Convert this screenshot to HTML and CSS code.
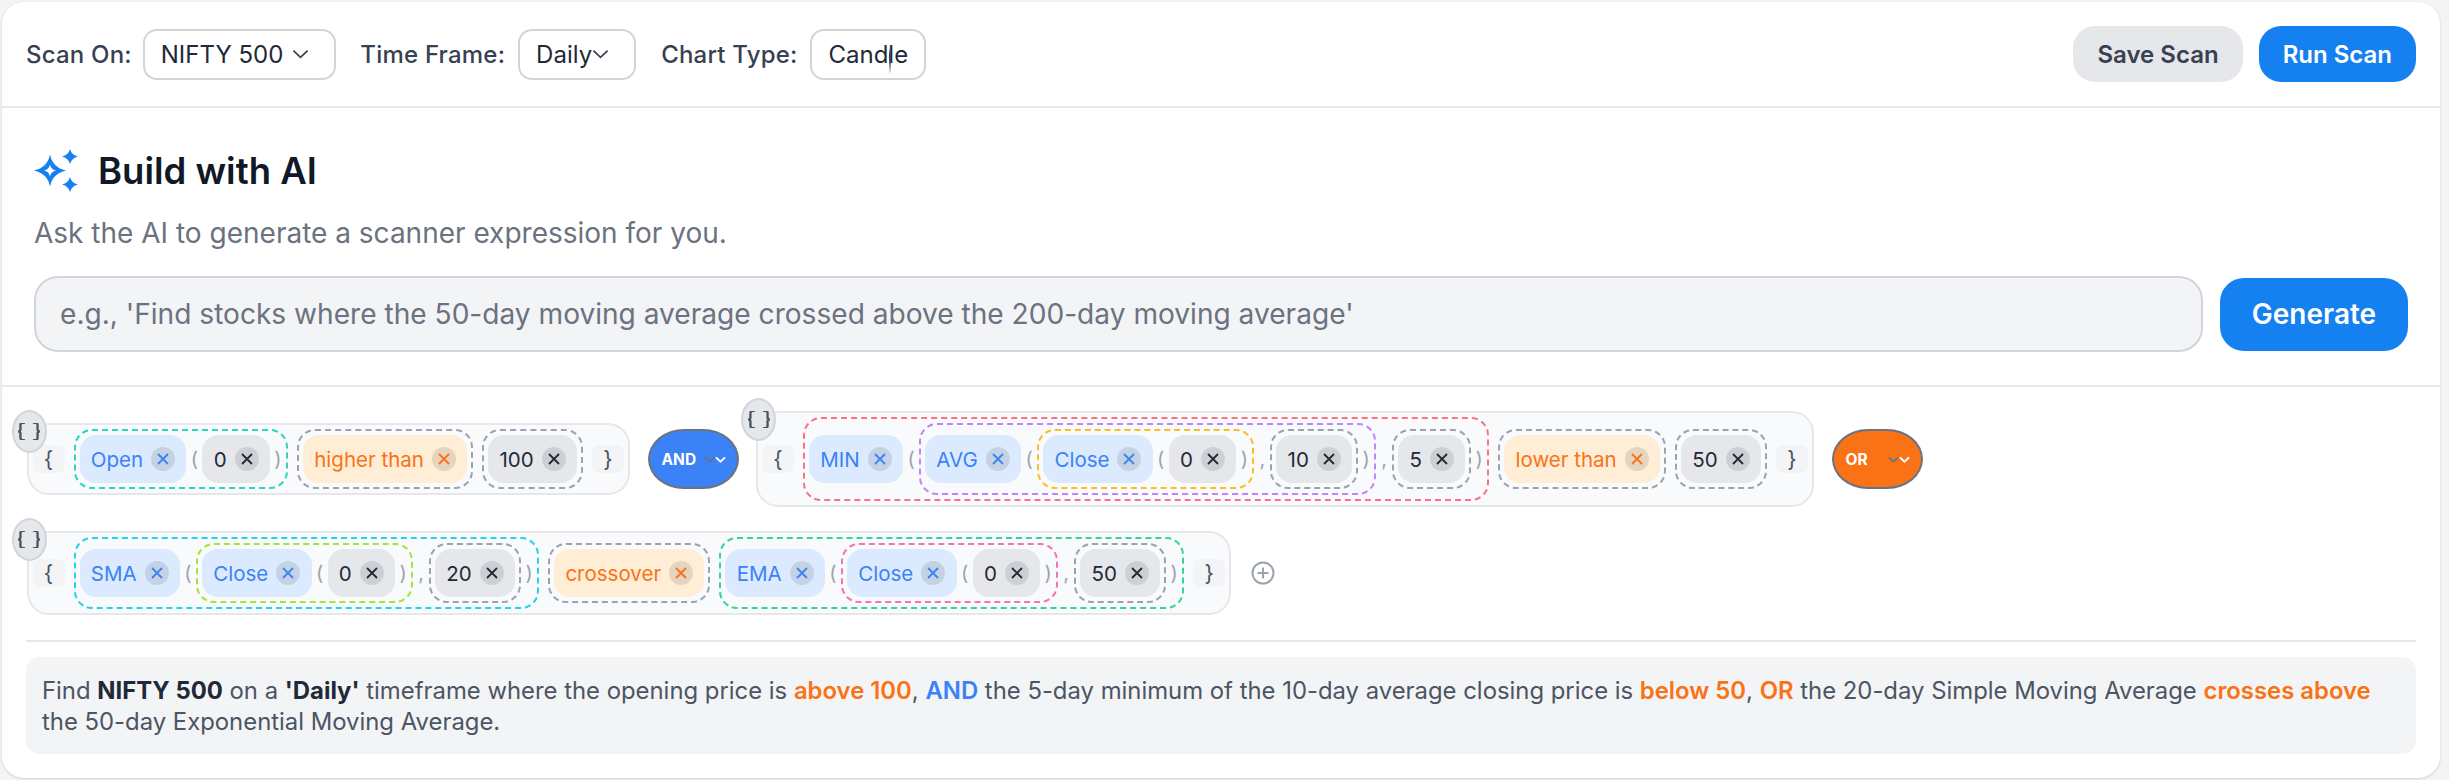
FILE: index.html
```html
<!DOCTYPE html>
<html lang="en">
<head>
    <meta charset="UTF-8">
    <meta name="viewport" content="width=device-width, initial-scale=1.0">
    <title>Scanner Builder</title>
    <link rel="stylesheet" href="styles.css">
</head>
<body>
    <svg class="defs" width="0" height="0">
        <symbol id="i-x" viewBox="0 0 12 12"><path d="M1 1l10 10M11 1L1 11"/></symbol>
        <symbol id="i-down" viewBox="0 0 18 10"><path d="M1.500 1.500L9 8.500l7.500-7"/></symbol>
        <symbol id="i-braces" viewBox="3 3 18 18" preserveAspectRatio="none"><path d="M8 3H7a2 2 0 0 0-2 2v5a2 2 0 0 1-2 2 2 2 0 0 1 2 2v5c0 1.100.9 2 2 2h1"/><path d="M16 21h1a2 2 0 0 0 2-2v-5c0-1.100.9-2 2-2a2 2 0 0 1-2-2V5a2 2 0 0 0-2-2h-1"/></symbol>
    </svg>

    <div class="card">
        <div class="toolbar">
            <div class="toolbar-left">
                <label class="field-label field-first">Scan On:</label>
                <div class="select select-wide">NIFTY 500 <svg class="chevron"><use href="#i-down"/></svg></div>
                <label class="field-label">Time Frame:</label>
                <div class="select select-tight">Daily<svg class="chevron"><use href="#i-down"/></svg></div>
                <label class="field-label">Chart Type:</label>
                <div class="select select-candle">Candle<svg class="chevron chevron-squashed" preserveAspectRatio="none" viewBox="0 0 18 10"><path d="M1.500 1.500L9 8.500l7.500-7"/></svg></div>
            </div>
            <div class="toolbar-right">
                <button class="btn btn-gray">Save Scan</button>
                <button class="btn btn-blue">Run Scan</button>
            </div>
        </div>

        <div class="ai-section">
            <div class="ai-title">
                <svg class="sparkles" viewBox="0 0 46 44">
                    <path fill-rule="evenodd" d="M16 5.500Q18.500 18.500 32 21.500 18.500 24.500 16 37.500 13.500 24.500 0 21.500 13.500 18.500 16 5.500ZM16 15.500Q15 20.500 10 21.500 15 22.500 16 27.500 17 22.500 22 21.500 17 20.500 16 15.500Z"/>
                    <path d="M36 0Q37.500 6 44 7.500 37.500 9 36 15 34.500 9 28 7.500 34.500 6 36 0Z"/>
                    <path d="M36 28Q37.500 34 44 35.500 37.500 37 36 43 34.500 37 28 35.500 34.500 34 36 28Z"/>
                </svg>
                <h2>Build with AI</h2>
            </div>
            <p class="ai-sub">Ask the AI to generate a scanner expression for you.</p>
            <div class="ai-form">
                <input class="ai-input" type="text" placeholder="e.g., 'Find stocks where the 50-day moving average crossed above the 200-day moving average'">
                <button class="btn-generate">Generate</button>
            </div>
        </div>

        <div class="builder">
            <div class="builder-row">
                <div class="group">
                    <button class="braces-btn"><svg><use href="#i-braces"/></svg></button>
                    <span class="brace">{</span>
                    <div class="dash d-teal">
                        <span class="chip chip-blue">Open <span class="x"><svg><use href="#i-x"/></svg></span></span>
                        <span class="paren">(</span>
                        <span class="chip chip-gray">0 <span class="x"><svg><use href="#i-x"/></svg></span></span>
                        <span class="paren">)</span>
                    </div>
                    <div class="dash d-gray"><span class="chip chip-orange">higher than <span class="x"><svg><use href="#i-x"/></svg></span></span></div>
                    <div class="dash d-gray"><span class="chip chip-gray">100 <span class="x"><svg><use href="#i-x"/></svg></span></span></div>
                    <span class="brace">}</span>
                </div>

                <button class="logic logic-and">AND <span class="logic-arrows"><svg class="arrow-back"><use href="#i-down"/></svg><svg class="arrow-front"><use href="#i-down"/></svg></span></button>

                <div class="group">
                    <button class="braces-btn"><svg><use href="#i-braces"/></svg></button>
                    <span class="brace">{</span>
                    <div class="dash d-rose">
                        <span class="chip chip-blue">MIN <span class="x"><svg><use href="#i-x"/></svg></span></span>
                        <span class="paren">(</span>
                        <div class="dash d-purple">
                            <span class="chip chip-blue">AVG <span class="x"><svg><use href="#i-x"/></svg></span></span>
                            <span class="paren">(</span>
                            <div class="dash d-amber">
                                <span class="chip chip-blue">Close <span class="x"><svg><use href="#i-x"/></svg></span></span>
                                <span class="paren">(</span>
                                <span class="chip chip-gray">0 <span class="x"><svg><use href="#i-x"/></svg></span></span>
                                <span class="paren">)</span>
                            </div>
                            <span class="paren">,</span>
                            <div class="dash d-gray"><span class="chip chip-gray">10 <span class="x"><svg><use href="#i-x"/></svg></span></span></div>
                            <span class="paren">)</span>
                        </div>
                        <span class="paren">,</span>
                        <div class="dash d-gray"><span class="chip chip-gray">5 <span class="x"><svg><use href="#i-x"/></svg></span></span></div>
                        <span class="paren">)</span>
                    </div>
                    <div class="dash d-gray"><span class="chip chip-orange">lower than <span class="x"><svg><use href="#i-x"/></svg></span></span></div>
                    <div class="dash d-gray"><span class="chip chip-gray">50 <span class="x"><svg><use href="#i-x"/></svg></span></span></div>
                    <span class="brace">}</span>
                </div>

                <button class="logic logic-or">OR <span class="logic-arrows"><svg class="arrow-back"><use href="#i-down"/></svg><svg class="arrow-front"><use href="#i-down"/></svg></span></button>
            </div>

            <div class="builder-row">
                <div class="group">
                    <button class="braces-btn"><svg><use href="#i-braces"/></svg></button>
                    <span class="brace">{</span>
                    <div class="dash d-cyan">
                        <span class="chip chip-blue">SMA <span class="x"><svg><use href="#i-x"/></svg></span></span>
                        <span class="paren">(</span>
                        <div class="dash d-lime">
                            <span class="chip chip-blue">Close <span class="x"><svg><use href="#i-x"/></svg></span></span>
                            <span class="paren">(</span>
                            <span class="chip chip-gray">0 <span class="x"><svg><use href="#i-x"/></svg></span></span>
                            <span class="paren">)</span>
                        </div>
                        <span class="paren">,</span>
                        <div class="dash d-gray"><span class="chip chip-gray">20 <span class="x"><svg><use href="#i-x"/></svg></span></span></div>
                        <span class="paren">)</span>
                    </div>
                    <div class="dash d-gray"><span class="chip chip-orange">crossover <span class="x"><svg><use href="#i-x"/></svg></span></span></div>
                    <div class="dash d-green">
                        <span class="chip chip-blue">EMA <span class="x"><svg><use href="#i-x"/></svg></span></span>
                        <span class="paren">(</span>
                        <div class="dash d-pink">
                            <span class="chip chip-blue">Close <span class="x"><svg><use href="#i-x"/></svg></span></span>
                            <span class="paren">(</span>
                            <span class="chip chip-gray">0 <span class="x"><svg><use href="#i-x"/></svg></span></span>
                            <span class="paren">)</span>
                        </div>
                        <span class="paren">,</span>
                        <div class="dash d-gray"><span class="chip chip-gray">50 <span class="x"><svg><use href="#i-x"/></svg></span></span></div>
                        <span class="paren">)</span>
                    </div>
                    <span class="brace">}</span>
                </div>

                <svg class="add-icon" viewBox="0 0 24 24"><circle cx="12" cy="12" r="10.500"/><path d="M12 6.500v11M6.500 12h11"/></svg>
            </div>
        </div>

        <div class="summary-wrap">
            <div class="summary">
                Find <strong>NIFTY 500</strong> on a <strong>'Daily'</strong> timeframe where the opening price is <b class="hl-orange">above 100</b>, <b class="hl-blue">AND</b> the 5-day minimum of the 10-day average closing price is <b class="hl-orange">below 50</b>, <b class="hl-orange">OR</b> the 20-day Simple Moving Average <b class="hl-orange">crosses above</b> the 50-day Exponential Moving Average.
            </div>
        </div>
    </div>
</body>
</html>
```

FILE: styles.css
```css
* {
    box-sizing: border-box;
}
html, body {
    height: 100%;
}
body {
    margin: 0;
    padding: 2px 9px 2px 2px;
    background-color: #f3f4f6;
    font-family: Inter, "Liberation Sans", sans-serif;
    color: #1f2937;
    overflow: hidden;
}
button {
    font-family: inherit;
    cursor: pointer;
}
.defs {
    position: absolute;
}
.card {
    height: 776px;
    background-color: #fff;
    border-radius: 22px;
    box-shadow: 0 1px 3px rgba(0, 0, 0, 0.15);
}

/* top bar */
.toolbar {
    height: 106px;
    display: flex;
    align-items: center;
    justify-content: space-between;
    padding: 0 24px;
    border-bottom: 2px solid #e5e7eb;
}
.toolbar-left {
    display: flex;
    align-items: center;
}
.toolbar-right {
    display: flex;
    align-items: center;
    gap: 16px;
}
.field-label {
    font-size: 24px;
    font-weight: 500;
    letter-spacing: 0.2px;
    color: #374151;
    margin-right: 13px;
}
.field-first {
    margin-right: 11px;
}
.select {
    height: 51px;
    display: flex;
    align-items: center;
    font-size: 24px;
    color: #1f2937;
    border: 2px solid #d1d5db;
    border-radius: 14px;
    padding: 0 25px 0 16px;
    margin-right: 25px;
}
.select-wide {
    margin-right: 24px;
}
.select-wide .chevron {
    margin-left: 9px;
}
.select-candle {
    padding-right: 16px;
    margin-right: 0;
}
.chevron {
    width: 17px;
    height: 10px;
    fill: none;
    stroke: #374151;
    stroke-width: 1.8;
    overflow: visible;
}
.chevron-squashed {
    width: 2px;
    height: 18px;
    margin: 8px 17px 0 -19px;
    stroke-width: 8;
}
.btn {
    height: 56px;
    border: none;
    border-radius: 22px;
    padding: 0 24px;
    font-size: 24px;
    font-weight: 600;
}
.btn-gray {
    background-color: #e5e7eb;
    color: #374151;
}
.btn-blue {
    background-color: #1580f0;
    color: #fff;
}

/* AI block */
.ai-section {
    height: 279px;
    padding: 41px 32px 0 32px;
    border-bottom: 2px solid #e5e7eb;
}
.ai-title {
    display: flex;
    align-items: center;
    gap: 18px;
    height: 44px;
}
.ai-title h2 {
    margin: 0;
    font-size: 36.500px;
    font-weight: 600;
    color: #111827;
}
.sparkles {
    width: 46px;
    height: 44px;
    fill: #1580f0;
}
.ai-sub {
    margin: 21px 0 0 0;
    font-size: 28px;
    line-height: 38px;
    color: #6b7280;
}
.ai-form {
    display: flex;
    align-items: center;
    gap: 17px;
    margin-top: 24px;
}
.ai-input {
    flex: 1;
    height: 76px;
    border: 2px solid #d1d5db;
    border-radius: 24px;
    background-color: #f3f4f6;
    padding: 0 24px;
    font-family: inherit;
    font-size: 28.100px;
    outline: none;
}
.ai-input::placeholder {
    color: #6b7280;
}
.btn-generate {
    width: 188px;
    height: 73px;
    border: none;
    border-radius: 24px;
    background-color: #1580f0;
    color: #fff;
    font-size: 28px;
    font-weight: 600;
}

/* expression builder */
.builder {
    display: flex;
    flex-direction: column;
    gap: 24px;
    padding: 24px 0 0 24.500px;
}
.builder-row {
    display: flex;
    align-items: center;
    gap: 17.500px;
}
.group {
    position: relative;
    display: flex;
    align-items: center;
    gap: 9px;
    padding: 4px;
    background-color: #f9fafb;
    border: 2px solid #e5e7eb;
    border-radius: 22px;
}
.braces-btn {
    position: absolute;
    left: -17px;
    top: -15px;
    width: 35px;
    height: 43px;
    padding: 0;
    display: flex;
    align-items: center;
    justify-content: center;
    background-color: #e5e7eb;
    border: 2px solid #d1d5db;
    border-radius: 50%;
}
.braces-btn svg {
    width: 22px;
    height: 17px;
    fill: none;
    stroke: #4b5563;
    stroke-width: 1.900;
    stroke-linecap: round;
    stroke-linejoin: round;
    overflow: visible;
}
.brace {
    width: 32px;
    height: 28px;
    display: flex;
    align-items: center;
    justify-content: center;
    font-size: 22px;
    color: #4b5563;
    background-color: #f3f4f6;
    border-radius: 7px;
}
.dash {
    display: flex;
    align-items: center;
    gap: 4px;
    padding: 4px;
    border: 2px dashed #9ca3af;
    border-radius: 18px;
}
.d-gray { border-color: #9ca3af; }
.d-teal { border-color: #2dd4bf; }
.d-rose { border-color: #fb7185; }
.d-purple { border-color: #c084fc; }
.d-amber { border-color: #fbbf24; }
.d-cyan { border-color: #22d3ee; }
.d-lime { border-color: #a3e635; }
.d-green { border-color: #34d399; }
.d-pink { border-color: #f472b6; }
.chip {
    height: 48px;
    display: flex;
    align-items: center;
    gap: 8px;
    padding: 0 11.300px;
    border-radius: 16px;
    font-size: 20.500px;
}
.chip-blue {
    background-color: #dbeafe;
    color: #3b82f6;
}
.chip-gray {
    background-color: #e5e7eb;
    color: #1f2937;
}
.chip-orange {
    background-color: #ffedd5;
    color: #f97316;
}
.x {
    width: 24px;
    height: 24px;
    display: flex;
    align-items: center;
    justify-content: center;
    background-color: rgba(0, 0, 0, 0.1);
    border-radius: 50%;
}
.x svg {
    width: 12px;
    height: 12px;
    fill: none;
    stroke: currentColor;
    stroke-width: 1.800;
}
.paren {
    width: 8px;
    text-align: center;
    font-size: 20px;
    color: #9ca3af;
}
.logic {
    width: 91px;
    height: 60px;
    display: flex;
    align-items: center;
    justify-content: space-between;
    padding: 0 11px 0 12px;
    border: 2px solid #6b7280;
    border-radius: 36px / 30px;
    color: #fff;
    font-size: 15.500px;
    font-weight: 700;
}
.logic-and {
    background-color: #3b82f6;
}
.logic-or {
    background-color: #f97316;
}
.logic-arrows {
    display: flex;
}
.logic-arrows svg {
    width: 11px;
    height: 7px;
    fill: none;
    stroke-width: 3.200;
    overflow: visible;
}
.arrow-back {
    stroke: #6b7280;
}
.arrow-front {
    stroke: #fff;
}
.add-icon {
    width: 24px;
    height: 24px;
    margin-left: 2px;
    fill: none;
    stroke: #9ca3af;
    stroke-width: 2;
}

/* plain language summary */
.summary-wrap {
    margin: 25px 24px 0 24px;
    padding-top: 15px;
    border-top: 2px solid #e5e7eb;
}
.summary {
    height: 97px;
    padding: 18px 16px 0 16px;
    background-color: #f3f4f6;
    border-radius: 14px;
    font-size: 23.875px;
    line-height: 31px;
    color: #4b5563;
}
.summary strong {
    font-weight: 700;
    color: #1f2937;
}
.hl-orange {
    font-weight: 600;
    color: #f97316;
}
.hl-blue {
    font-weight: 600;
    color: #3b82f6;
}
```
